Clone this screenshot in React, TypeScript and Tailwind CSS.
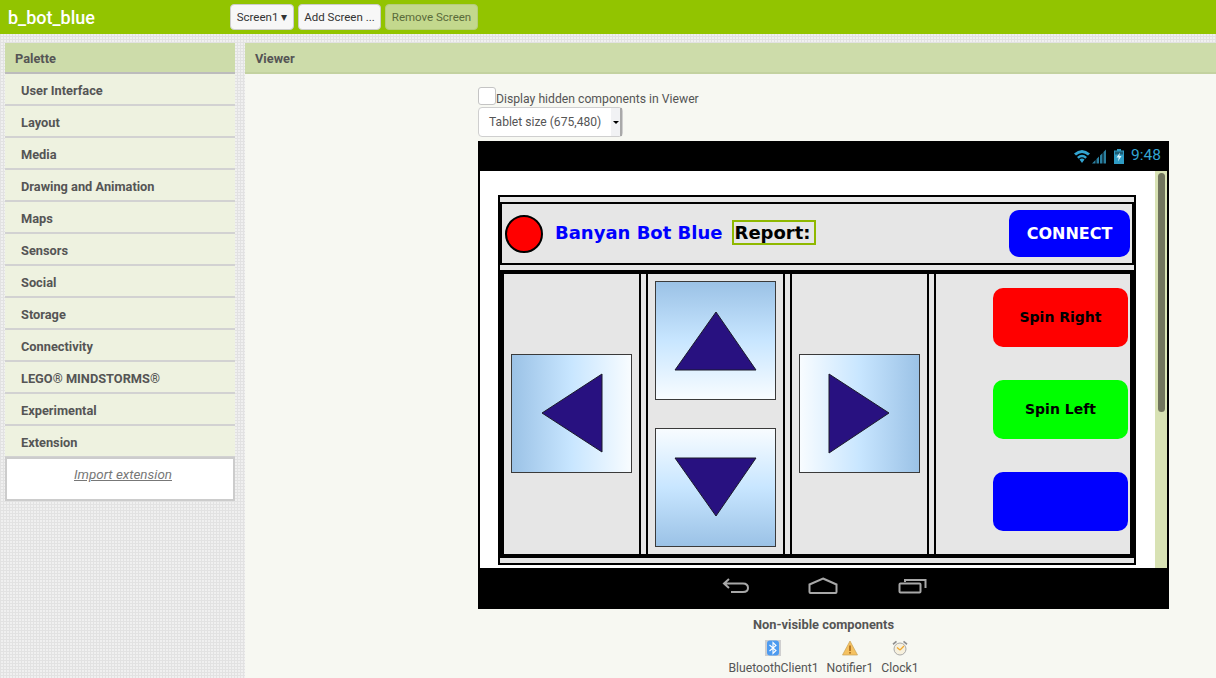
const paletteItems = [
  "User Interface",
  "Layout",
  "Media",
  "Drawing and Animation",
  "Maps",
  "Sensors",
  "Social",
  "Storage",
  "Connectivity",
  "LEGO® MINDSTORMS®",
  "Experimental",
  "Extension",
];

function Arrow({ points, gradient }: { points: string; gradient: string }) {
  return (
    <div className={`w-[121px] h-[119px] shrink-0 border border-[#3a3a3a] ${gradient}`}>
      <svg width="119" height="117" viewBox="1 1 119 117" className="block">
        <polygon points={points} fill="#281180" stroke="#1a1a2a" strokeWidth="1" />
      </svg>
    </div>
  );
}

function SpinButton({ color, label }: { color: string; label?: string }) {
  return (
    <div
      className={`w-[135px] h-[59px] rounded-[10px] flex items-center justify-center font-['DejaVu_Sans',sans-serif] font-bold text-[14px] text-black ${color}`}
    >
      {label}
    </div>
  );
}

function StatusIcons() {
  return (
    <svg width="32" height="15" viewBox="0 0 32 15" className="block">
      <path d="M0 4.5 Q8 -2.5 16 4.5 L14 6.5 Q8 1.5 2 6.5 Z" fill="#33a5d2" />
      <path d="M3 8 Q8 3.5 13 8 L11.3 9.7 Q8 7 4.7 9.7 Z" fill="#33a5d2" />
      <path d="M5.5 10.5 Q8 8.5 10.5 10.5 L8 14 Z" fill="#33a5d2" />
      <path d="M18 14.5 L21.5 11 V14.5 Z M22.5 14.5 V10 L25 7.5 V14.5 Z M26 14.5 V6.5 L28.5 4 V14.5 Z M29.5 14.5 V3 L32 0.5 V14.5 Z" fill="#2a7f9f" />
    </svg>
  );
}

function Battery() {
  return (
    <svg width="10" height="15" viewBox="0 0 10 15" className="block">
      <rect x="3" y="0" width="4" height="2" fill="#2f9cc4" />
      <rect x="0" y="1.5" width="10" height="13.5" fill="#2f9cc4" />
      <rect x="1" y="2.5" width="8" height="3" fill="#1f5d75" />
      <path d="M6 3.5 L2.5 8.5 L4.7 8.5 L4 12.5 L7.5 7 L5.3 7 Z" fill="#dff4fb" />
    </svg>
  );
}

export default function App() {
  return (
    <div className="w-[1216px] h-[678px] overflow-hidden font-['Roboto',sans-serif] bg-[#f0f0f0] bg-[linear-gradient(#e2e2e2_1px,transparent_1px),linear-gradient(90deg,#e2e2e2_1px,transparent_1px)] bg-[length:3px_3px]">
      {/* Top bar */}
      <div className="h-[34px] bg-[#92c400] flex items-start">
        <div className="w-[230px] pl-2 pt-[6px] text-white font-medium text-[18px] leading-6">b_bot_blue</div>
        <div className="flex gap-1 pt-1 text-[11.5px] text-[#333]">
          <div className="w-16 h-[26px] pt-px bg-[#f7f7f7] border border-[#ccc] rounded-[4px] flex items-center justify-center">
            Screen1 ▾
          </div>
          <div className="w-[83px] h-[26px] pt-px bg-[#f7f7f7] border border-[#ccc] rounded-[4px] flex items-center justify-center">
            Add Screen ...
          </div>
          <div className="w-[93px] h-[26px] pt-px bg-[#c3d88d] border border-[#b5cc7c] rounded-[4px] flex items-center justify-center text-[#5a6b3a]">
            Remove Screen
          </div>
        </div>
      </div>

      <div className="flex pt-[9px] items-start">
        {/* Palette */}
        <div className="w-[230px] ml-[5px] shrink-0">
          <div className="h-[31px] pt-[2px] bg-[#cddcaa] border-b-2 border-[#bcbcbc] pl-[10px] flex items-center text-[12.8px] font-bold text-[#555]">
            Palette
          </div>
          {paletteItems.map((item) => (
            <div
              key={item}
              className="h-8 pt-1 bg-[#eef2e0] border-b-2 border-[#d2d2d2] pl-4 flex items-center text-[12.8px] font-bold text-[#555]"
            >
              {item}
            </div>
          ))}
          <div className="h-[44px] -mt-[1px] bg-white border-2 border-[#cccccc] pt-[6px] pl-[6px] text-center text-[13.4px] italic underline text-[#777]">
            Import extension
          </div>
        </div>

        {/* Viewer */}
        <div className="ml-[10px] w-[971px] h-[635px] bg-[#f7f8f2] shrink-0">
          <div className="h-[31px] pt-[2px] bg-[#cddcaa] border-b-2 border-[#c3d2a0] pl-[10px] flex items-center text-[12.8px] font-bold text-[#555]">
            Viewer
          </div>
          <div className="pl-[233px] pt-[11px]">
            <div className="flex items-end h-[20px] text-[12.2px] text-[#555] leading-[14px]">
              <div className="w-[18px] h-[18px] bg-white border border-[#c4c4c4] rounded-[3px] shrink-0" />
              <span className="-mb-px">Display hidden components in Viewer</span>
            </div>
            <div className="mt-[2px] w-[145px] h-[30px] bg-white border border-[#cfcfcf] rounded-[4px] flex items-stretch text-[12.1px] text-[#555]">
              <div className="flex-1 pl-[10px] pt-px flex items-center">Tablet size (675,480)</div>
              <div className="w-[11px] bg-[#f1f2f4] border-r-2 border-[#a9a9a9] flex items-center justify-center">
                <div className="w-0 h-0 border-x-[3px] border-x-transparent border-t-[3px] border-t-black" />
              </div>
            </div>

            {/* Phone */}
            <div className="mt-1 w-[691px] h-[468px] bg-black flex flex-col">
              <div className="h-[30px] flex items-center pl-[596px] shrink-0">
                <StatusIcons />
                <div className="ml-2">
                  <Battery />
                </div>
                <span className="ml-[7px] text-[15.5px] text-[#33a5d2]">9:48</span>
              </div>
              <div className="mx-[2px] h-[397px] bg-white flex shrink-0">
                <div className="flex-1 pl-[18px] pt-6">
                  {/* Outer arrangement */}
                  <div className="w-[638px] h-[370px] bg-[#e6e6e6] border-2 border-black pt-[5px]">
                    {/* Header row */}
                    <div className="w-[634px] h-[63px] border-2 border-black flex items-center text-[18px] font-bold font-['DejaVu_Sans',sans-serif]">
                      <div className="w-[38px] h-[38px] ml-[3px] rounded-full bg-[#ff0000] border-2 border-black shrink-0" />
                      <span className="ml-[12px] -mt-[3px] text-[#0000ff]">Banyan Bot Blue</span>
                      <div className="ml-[9px] w-[84px] h-[25px] -mt-[2px] border-2 border-[#8fb800] text-black flex items-center pl-px leading-none">
                        Report:
                      </div>
                      <div className="ml-auto w-[121px] h-[47px] mr-[2px] rounded-[10px] bg-[#0000ff] text-white text-[16px] flex items-center justify-center">
                        CONNECT
                      </div>
                    </div>
                    {/* Control row */}
                    <div className="mt-[5px] w-[634px] h-[288px] border-[4px] border-black flex">
                      <div className="w-[137px] border-r-[2px] border-black flex items-center pl-[7px] pb-[2px] shrink-0">
                        <Arrow
                          points="31,59 91,20 91,98"
                          gradient="bg-gradient-to-r from-[#9bc2e6] via-[#c8e6ff] via-50% to-[#f8fcff]"
                        />
                      </div>
                      <div className="w-[5px] shrink-0" />
                      <div className="w-[139px] border-x-[2px] border-black flex flex-col items-center gap-[28px] pt-[7px] shrink-0">
                        <Arrow
                          points="61,31 101,89 20,89"
                          gradient="bg-gradient-to-b from-[#9bc2e6] via-[#c8e6ff] via-50% to-[#f8fcff]"
                        />
                        <Arrow
                          points="20,30 101,30 61,88"
                          gradient="bg-gradient-to-t from-[#9bc2e6] via-[#c8e6ff] via-50% to-[#f8fcff]"
                        />
                      </div>
                      <div className="w-[5px] shrink-0" />
                      <div className="w-[139px] border-x-[2px] border-black flex items-center pl-[7px] pb-[2px] shrink-0">
                        <Arrow
                          points="30,20 90,59 30,99"
                          gradient="bg-gradient-to-l from-[#9bc2e6] via-[#c8e6ff] via-50% to-[#f8fcff]"
                        />
                      </div>
                      <div className="w-[5px] shrink-0" />
                      <div className="flex-1 border-l-[2px] border-black flex flex-col items-end gap-[33px] pt-[14px] pr-[2px]">
                        <SpinButton color="bg-[#ff0000]" label="Spin Right" />
                        <SpinButton color="bg-[#00ff00]" label="Spin Left" />
                        <SpinButton color="bg-[#0000ff]" />
                      </div>
                    </div>
                  </div>
                </div>
                {/* Scrollbar */}
                <div className="w-3 bg-[#d8e2b4] pt-[2px] pl-[3px] shrink-0">
                  <div className="w-[7px] h-[239px] rounded-[4px] bg-[#70745c]" />
                </div>
              </div>
              {/* Nav bar */}
              <div className="flex-1 flex items-start pl-[244px] pt-[9px]">
                <svg width="28" height="17" viewBox="0 0 28 17" fill="none" stroke="#a8a8a8" strokeWidth="2" className="block">
                  <path d="M7 2 L2 6.5 L7 11 M2 6.5 H21 Q26 6.5 26 11 Q26 15 21 15 H9" />
                </svg>
                <svg width="30" height="17" viewBox="0 0 30 17" fill="none" stroke="#a8a8a8" strokeWidth="2" className="block ml-[58px]">
                  <path d="M15 1.5 L28.5 7.5 V15 Q28.5 16 27.5 16 H2.5 Q1.5 16 1.5 15 V7.5 Z" />
                </svg>
                <svg width="29" height="17" viewBox="0 0 29 17" fill="none" stroke="#a8a8a8" strokeWidth="2" className="block ml-[60px]">
                  <path d="M7 5 V3 H27.5 V11" />
                  <rect x="1.5" y="6.5" width="21" height="9" rx="1" />
                </svg>
              </div>
            </div>

            {/* Non-visible components */}
            <div className="w-[691px] text-center pt-[9px]">
              <div className="text-[12.85px] font-bold text-[#555] leading-[14px]">Non-visible components</div>
              <div className="flex justify-center gap-[8px] mt-[8px] text-[12.2px] text-[#555] leading-[14px]">
                <div className="flex flex-col items-center gap-[5px]">
                  <svg width="16" height="16" viewBox="0 0 16 16" className="block">
                    <rect width="16" height="16" fill="#cfcfcf" />
                    <rect x="2" y="0.5" width="12" height="15" rx="3" fill="#4d9bf0" />
                    <path d="M4.5 5 L11 10.5 L8 13.5 V2.5 L11 5.5 L4.5 11" fill="none" stroke="#fff" strokeWidth="1.1" />
                  </svg>
                  <span>BluetoothClient1</span>
                </div>
                <div className="flex flex-col items-center gap-[5px]">
                  <svg width="16" height="16" viewBox="0 0 16 16" className="block">
                    <path d="M8 1 L15.5 15 H0.5 Z" fill="#f5c160" stroke="#c9a35a" strokeWidth="0.7" />
                    <rect x="7.2" y="5.5" width="1.6" height="5.5" fill="#a8691c" />
                    <rect x="7.2" y="12" width="1.6" height="1.6" fill="#a8691c" />
                  </svg>
                  <span>Notifier1</span>
                </div>
                <div className="flex flex-col items-center gap-[5px]">
                  <svg width="16" height="16" viewBox="0 0 16 16" className="block">
                    <path d="M0.5 3.5 L4 0.8 L5 2 L1.5 5 Z M15.5 3.5 L12 0.8 L11 2 L14.5 5 Z" fill="#8f8f8f" />
                    <circle cx="8" cy="9" r="6" fill="#f6f0dd" stroke="#a9a9a9" />
                    <path d="M8 10 L5 7.5 M8 10 L12 6" stroke="#f0a830" strokeWidth="1.3" fill="none" />
                  </svg>
                  <span>Clock1</span>
                </div>
              </div>
            </div>
          </div>
        </div>
      </div>
    </div>
  );
}
